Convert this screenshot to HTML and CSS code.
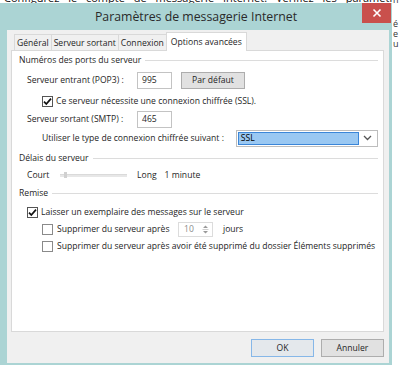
FILE: index.html
```html
<!DOCTYPE html>
<html lang="fr">
<head>
<meta charset="utf-8">
<title>Paramètres de messagerie Internet</title>
<link rel="stylesheet" href="styles.css">
</head>
<body>
<div class="desk">
  <div class="desk-top"><span class="desk-line">Configurez le compte de messagerie Internet. Vérifiez les paramètres ci-dessous.</span></div>
  <div class="desk-side"><span>n</span><span>é</span><span>e</span><span>u</span></div>
</div>

<div class="window">
  <div class="titlebar">
    <div class="title">Paramètres de messagerie Internet</div>
    <div class="close">
      <svg width="10" height="10" viewBox="0 0 10 10"><path d="M1.5 1.5 L8.5 8.5 M8.5 1.5 L1.5 8.5" stroke="#fff" stroke-width="1.6" fill="none"/></svg>
    </div>
  </div>
  <div class="client">
    <div class="tabs">
      <div class="tab">Général</div>
      <div class="tab">Serveur sortant</div>
      <div class="tab">Connexion</div>
      <div class="tab active">Options avancées</div>
    </div>
    <div class="panel">
      <div class="group g1"><span>Numéros des ports du serveur</span></div>
      <div class="row r1 ind1">
        <span class="lbl-port">Serveur entrant (POP3) :</span>
        <div class="input">995</div>
        <div class="btn btn-def">Par défaut</div>
      </div>
      <div class="row r2 ind2">
        <span class="cb checked"><svg width="9" height="9" viewBox="0 0 9 9"><path d="M1 4.6 L3.3 7 L8 1.6" stroke="#111" stroke-width="1.7" fill="none"/></svg></span>
        <span class="cbl">Ce serveur nécessite une connexion chiffrée (SSL).</span>
      </div>
      <div class="row r3 ind1">
        <span class="lbl-port">Serveur sortant (SMTP) :</span>
        <div class="input">465</div>
      </div>
      <div class="row r4 ind2">
        <span class="lbl-enc">Utiliser le type de connexion chiffrée suivant :</span>
        <div class="select">
          <div class="sel-hl">SSL</div>
          <div class="sel-arrow"><svg width="9" height="6" viewBox="0 0 9 6"><path d="M1 1 L4.5 4.5 L8 1" stroke="#555" stroke-width="1.3" fill="none"/></svg></div>
        </div>
      </div>
      <div class="group g2"><span>Délais du serveur</span></div>
      <div class="row r5 ind1">
        <span class="lbl-court">Court</span>
        <div class="slider"><span class="thumb"></span></div>
        <span class="long">Long</span>
        <span class="minute">1 minute</span>
      </div>
      <div class="group g3"><span>Remise</span></div>
      <div class="row r6 ind1">
        <span class="cb checked"><svg width="9" height="9" viewBox="0 0 9 9"><path d="M1 4.6 L3.3 7 L8 1.6" stroke="#111" stroke-width="1.7" fill="none"/></svg></span>
        <span class="cbl">Laisser un exemplaire des messages sur le serveur</span>
      </div>
      <div class="row r7 ind2">
        <span class="cb"></span>
        <span class="cbl lbl-supp">Supprimer du serveur après</span>
        <div class="spin">
          <span class="spin-val">10</span>
          <svg class="spin-arr" width="7" height="11" viewBox="0 0 7 11"><path d="M1 4 L3.5 1.5 L6 4 Z M1 7 L3.5 9.5 L6 7 Z" fill="#9a9a9a"/><path d="M0.5 5.5 H6.5" stroke="#cfcfcf" stroke-width="1"/></svg>
        </div>
        <span class="jours">jours</span>
      </div>
      <div class="row r8 ind2">
        <span class="cb"></span>
        <span class="cbl">Supprimer du serveur après avoir été supprimé du dossier Éléments supprimés</span>
      </div>
    </div>
    <div class="footer">
      <div class="btn btn-ok">OK</div>
      <div class="btn">Annuler</div>
    </div>
  </div>
</div>
</body>
</html>
```

FILE: styles.css
```css
* { box-sizing: border-box; }
html, body { margin: 0; padding: 0; }
body {
  width: 400px;
  height: 368px;
  overflow: hidden;
  position: relative;
  background: #fff;
  font-family: "Open Sans", "Noto Sans", sans-serif;
  font-size: 8.6px;
  color: #1e1e1e;
}

/* desktop content behind the dialog: only slivers show */
.desk {
  position: absolute;
  left: 0;
  top: 0;
  width: 400px;
  height: 368px;
  z-index: 0;
}
.desk-top {
  height: 3px;
  width: 392px;
  overflow: hidden;
  position: relative;
}
.desk-line {
  position: absolute;
  left: 4px;
  top: -10px;
  font-size: 11px;
  line-height: 15px;
  color: #111;
  white-space: nowrap;
  word-spacing: 6px;
}
.desk-side {
  position: absolute;
  left: 393px;
  top: 0;
  width: 7px;
  height: 50px;
  overflow: hidden;
  display: flex;
  flex-direction: column;
  font-size: 9px;
  line-height: 10px;
  color: #333;
}
.desk-side span:first-child { margin-top: -5px; margin-bottom: 14px; }

/* dialog window */
.window {
  position: absolute;
  z-index: 2;
  left: 0;
  top: 3px;
  width: 392px;
  height: 362px;
  background: #abd4d4;
  display: flex;
  flex-direction: column;
}
.titlebar {
  height: 27px;
  position: relative;
  display: flex;
  align-items: center;
  justify-content: center;
}
.title {
  font-size: 12.3px;
  color: #2a2a2a;
  margin-top: -1px;
}
.close {
  position: absolute;
  right: 1px;
  top: 0;
  width: 29px;
  height: 20px;
  background: #c9504c;
  display: flex;
  align-items: center;
  justify-content: center;
}

.client {
  margin: 0 3px 0 7px;
  height: 333px;
  background: #f0f0f0;
  padding: 0 5px 0 4px;
  display: flex;
  flex-direction: column;
}

/* tabs */
.tabs {
  height: 20px;
  display: flex;
  align-items: flex-end;
  padding-left: 3px;
  position: relative;
  z-index: 1;
}
.tab {
  height: 16px;
  border: 1px solid #d9d9d9;
  border-bottom: none;
  margin-right: -1px;
  padding: 0 2px;
  display: flex;
  align-items: center;
  background: #f0f0f0;
  white-space: nowrap;
}
.tab.active {
  height: 19px;
  background: #fff;
  margin-bottom: -1px;
  padding: 0 4px 1px;
}

.panel {
  height: 282px;
  background: #fff;
  border: 1px solid #d9d9d9;
  padding-right: 5px;
  display: flex;
  flex-direction: column;
}

/* group headers */
.group {
  display: flex;
  align-items: center;
  padding-left: 7px;
}
.group::after {
  content: "";
  flex: 1;
  height: 1px;
  background: #dcdcdc;
  margin-left: 4px;
}
.g1 { height: 18px; }
.g2 { height: 18px; }
.g3 { height: 20px; }

.row {
  display: flex;
  align-items: center;
  white-space: nowrap;
}
.ind1 { padding-left: 15px; }
.ind2 { padding-left: 30px; }
.r1 { height: 22px; }
.r2 { height: 20px; }
.r3 { height: 16px; }
.r4 { height: 22px; }
.r5 { height: 16px; }
.r6 { height: 18px; }
.r7 { height: 16px; }
.r8 { height: 18px; }

.lbl-port { width: 110px; }
.input {
  width: 35px;
  height: 17px;
  border: 1px solid #c3c3c3;
  background: #fff;
  padding-left: 4px;
  display: flex;
  align-items: center;
}
.btn {
  width: 63px;
  height: 18px;
  border: 1px solid #adadad;
  background: #e1e1e1;
  display: flex;
  align-items: center;
  justify-content: center;
}
.btn-def {
  margin-left: 9px;
  width: 64px;
  height: 17px;
}

.cb {
  width: 11px;
  height: 11px;
  border: 1px solid #8a8a8a;
  background: #fff;
  display: flex;
  align-items: center;
  justify-content: center;
  flex: none;
}
.cb.checked { border-color: #555; }
.cbl { margin-left: 3px; }
.r7 .cbl, .r8 .cbl { margin-left: 4px; }

.lbl-enc { width: 195px; }
.select {
  width: 143px;
  height: 17px;
  border: 1px solid #bdbdbd;
  background: #fff;
  display: flex;
  padding: 1px;
}
.sel-hl {
  flex: 1;
  background: #9ac8f2;
  border: 1px solid #3b86d8;
  padding-left: 2px;
  display: flex;
  align-items: center;
  color: #000;
}
.sel-arrow {
  width: 17px;
  display: flex;
  align-items: center;
  justify-content: center;
}

.lbl-court { width: 33px; }
.slider {
  width: 67px;
  height: 3px;
  background: #e7e7e7;
  border-top: 1px solid #dadada;
  position: relative;
}
.thumb {
  position: absolute;
  left: 4px;
  top: -3px;
  width: 3px;
  height: 6px;
  background: #d0d0d0;
}
.long { margin-left: 10px; }
.minute { margin-left: 8px; }

.lbl-supp { width: 121px; }
.spin {
  width: 35px;
  height: 15px;
  border: 1px solid #dcdcdc;
  background: #fff;
  display: flex;
  align-items: center;
  justify-content: space-between;
  padding: 0 3px 0 5px;
  color: #8c8c8c;
}
.jours { margin-left: 10px; }

/* footer buttons */
.footer {
  display: flex;
  justify-content: flex-end;
  gap: 7px;
  padding-top: 7px;
}
.btn-ok {
  border-color: #86b7e8;
  background: #e4e8ec;
}
```
